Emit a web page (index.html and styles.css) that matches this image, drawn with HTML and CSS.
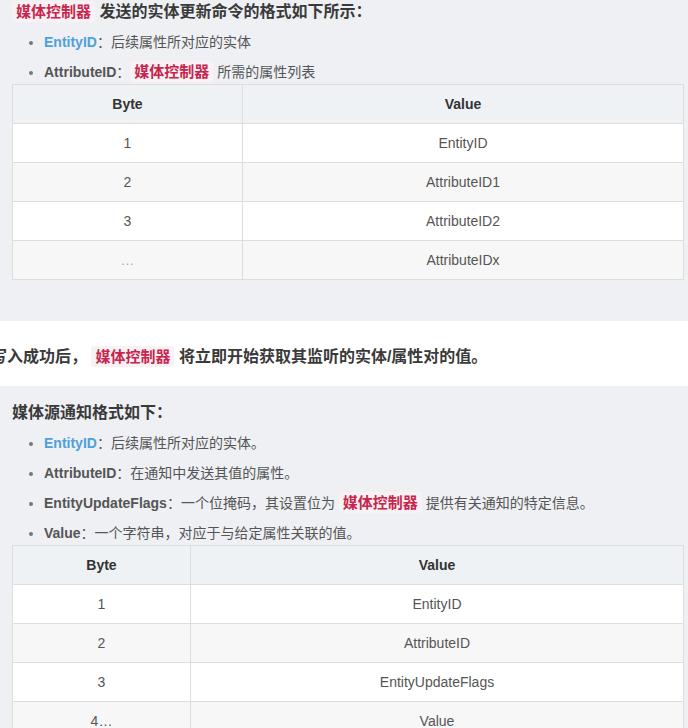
FILE: index.html
```html
<!DOCTYPE html>
<html lang="zh-CN">
<head>
<meta charset="utf-8">
<title>媒体控制器</title>
<link rel="stylesheet" href="styles.css">
</head>
<body>
<section class="block gray first">
  <h3 class="title"><code class="chip">媒体控制器</code> 发送的实体更新命令的格式如下所示：</h3>
  <ul class="list">
    <li><strong class="blue">EntityID</strong>：后续属性所对应的实体</li>
    <li><strong>AttributeID</strong>：<code class="chip">媒体控制器</code> 所需的属性列表</li>
  </ul>
  <table class="tbl t1">
    <thead><tr><th class="c1">Byte</th><th>Value</th></tr></thead>
    <tbody>
      <tr><td>1</td><td>EntityID</td></tr>
      <tr><td>2</td><td>AttributeID1</td></tr>
      <tr><td>3</td><td>AttributeID2</td></tr>
      <tr><td class="dots">…</td><td>AttributeIDx</td></tr>
    </tbody>
  </table>
</section>
<section class="block white">
  <p class="para">写入成功后， <code class="chip">媒体控制器</code> 将立即开始获取其监听的实体/属性对的值。</p>
</section>
<section class="block gray second">
  <h3 class="title">媒体源通知格式如下：</h3>
  <ul class="list">
    <li><strong class="blue">EntityID</strong>：后续属性所对应的实体。</li>
    <li><strong>AttributeID</strong>：在通知中发送其值的属性。</li>
    <li><strong>EntityUpdateFlags</strong>：一个位掩码，其设置位为 <code class="chip">媒体控制器</code> 提供有关通知的特定信息。</li>
    <li><strong>Value</strong>：一个字符串，对应于与给定属性关联的值。</li>
  </ul>
  <table class="tbl t2">
    <thead><tr><th class="c1">Byte</th><th>Value</th></tr></thead>
    <tbody>
      <tr><td>1</td><td>EntityID</td></tr>
      <tr><td>2</td><td>AttributeID</td></tr>
      <tr><td>3</td><td>EntityUpdateFlags</td></tr>
      <tr><td>4…</td><td>Value</td></tr>
    </tbody>
  </table>
</section>
</body>
</html>
```

FILE: styles.css
```css
html { overflow: hidden; }
body {
  margin: 0;
  font-family: "Liberation Sans", Arial, "Noto Sans CJK SC", sans-serif;
  color: #555;
  background: #eef0f4;
}
.block { padding: 0 4px 0 12px; }
.gray { background: #eef0f4; }
.first { padding-top: 0; padding-bottom: 41px; }
.second { padding-top: 15px; padding-bottom: 40px; }
.white { background: #fff; padding-top: 24px; padding-bottom: 17px; }

.title {
  margin: 0;
  font-size: 16px;
  line-height: 24px;
  font-weight: bold;
  color: #3a3a3a;
}
.chip {
  font-family: "Liberation Sans", Arial, "Noto Sans CJK SC", sans-serif;
  font-size: 15px;
  font-weight: bold;
  color: #c7254e;
  background: #f9f2f4;
  padding: 2px 4px;
  border-radius: 3px;
}
.list {
  margin: 8px 0 2px;
  padding-left: 32px;
  font-size: 14px;
  line-height: 20px;
  color: #555;
}
.list li + li { margin-top: 10px; }
.list li::marker { color: #777; }
.list strong { color: #555; }
.list strong.blue { color: #4ea1db; }
.second .list { margin-bottom: 2px; }

.para {
  margin: 0 0 0 -21px;
  font-size: 16px;
  line-height: 24px;
  font-weight: bold;
  color: #3a3a3a;
  white-space: nowrap;
}

.tbl {
  width: 672px;
  border-collapse: collapse;
  font-size: 14px;
  color: #555;
  background: #fff;
}
.tbl th, .tbl td {
  border: 1px solid #dddddd;
  height: 38px;
  padding: 0;
  text-align: center;
  vertical-align: middle;
}
.tbl th {
  background: #eff2f5;
  color: #333;
  font-weight: bold;
}
.tbl tbody tr:nth-child(even) td { background: #f7f7f7; }
.t1 .c1 { width: 229px; }
.t2 .c1 { width: 177px; }
.dots { color: #aaa; }
```
